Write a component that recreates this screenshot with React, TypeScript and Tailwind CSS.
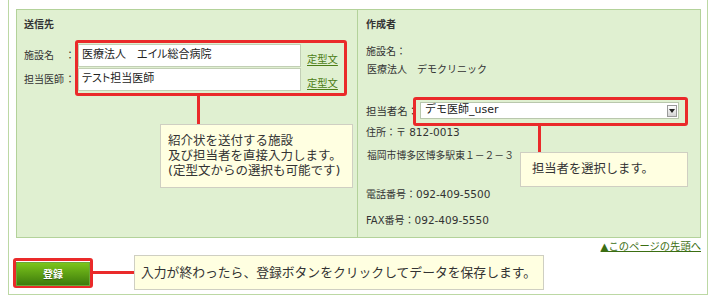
const red = "border-[#ea2a2a]";

function Label({ text }: { text: string }) {
  return (
    <div className="h-[23px] flex items-center justify-between">
      <span>{text}</span>
      <span>：</span>
    </div>
  );
}

function TextRow({ value }: { value: string }) {
  return (
    <div className="h-[23px] flex items-center">
      <div className="w-[223px] h-[23px] border border-[#c2cfb5] bg-white flex items-center pl-[3px] text-[11px] text-[#222] [font-feature-settings:'palt']">
        {value}
      </div>
      <a href="#" className="ml-[6px] mt-[7px] text-[10.3px] leading-[12px] text-[#4c7d16] underline underline-offset-2">
        定型文
      </a>
    </div>
  );
}

export default function App() {
  return (
    <div className="w-[720px] h-[306px] bg-white text-[#333] font-['DejaVu_Sans','Noto_Sans_CJK_JP',sans-serif]">
      <div className="ml-2 w-[700px] border-x border-b border-[#bcd8a4] pl-[7px] pr-[6px] pt-[9px] pb-[4px]">
        {/* form table */}
        <div className="flex h-[229px] border border-[#b3d29a] bg-[#e0f0d1]">
          {/* 送信先 */}
          <div className="relative w-[341px] border-r border-[#b3d29a] pl-[7px] pt-[7px]">
            <div className="text-[10px] font-bold leading-4">送信先</div>
            <div className="mt-[7px] flex">
              <div className="w-[51px] pt-[4px] flex flex-col gap-[1px] text-[10px]">
                <Label text="施設名" />
                <Label text="担当医師" />
              </div>
              <div className={`w-[272px] border-[3px] ${red} rounded-[3px] pt-[1px] pb-[2px] flex flex-col gap-[1px]`}>
                <TextRow value="医療法人　エイル総合病院" />
                <TextRow value="テスト担当医師" />
              </div>
            </div>

            <div className="absolute left-[180px] top-[85px] w-[3px] h-[29px] bg-[#ea2a2a]" />
            <div className="absolute left-[143px] top-[114px] w-[193px] h-[64px] border border-[#cfcfc2] bg-[#ffffe1] pl-[7px] pt-[8px] text-[12.5px] leading-[15px] text-[#333]">
              <div>紹介状を送付する施設</div>
              <div>及び担当者を直接入力します。</div>
              <div>(定型文からの選択も可能です)</div>
            </div>
          </div>

          {/* 作成者 */}
          <div className="relative flex-1 pl-[8px] pt-[7px] text-[10px]">
            <div className="font-bold leading-4">作成者</div>
            <div className="mt-[11px] leading-4">施設名：</div>
            <div className="mt-[2px] pl-[1px] leading-4">医療法人　デモクリニック</div>
            <div className="mt-[19px] flex items-center">
              <div className="w-[47px] whitespace-nowrap text-[10.4px]">担当者名：</div>
              <div className={`w-[275px] h-[29px] border-[3px] ${red} rounded-[3px] pl-[4px] pt-[2px]`}>
                <div className="w-[259px] h-[17px] border border-[#b9c7ad] bg-white flex items-center justify-between pl-[4px] pr-[1px]">
                  <span className="text-[11px] text-[#222]">デモ医師_user</span>
                  <span className="w-[10px] h-[12px] border border-[#9a9a9a] bg-linear-to-b from-white to-[#d4d4d4] flex items-center justify-center">
                    <svg width="6" height="4" viewBox="0 0 6 4">
                      <path d="M0 0h6L3 4z" fill="#222" />
                    </svg>
                  </span>
                </div>
              </div>
            </div>
            <div className="leading-[12px]">
              住所：〒 <span className="text-[10.5px]">812-0013</span>
            </div>
            <div className="mt-[11px] pl-[1px] leading-[12px] text-[9.8px]">福岡市博多区博多駅東１－２－３</div>
            <div className="mt-[26px] leading-[12px]">
              電話番号：<span className="text-[10.5px]">092-409-5500</span>
            </div>
            <div className="mt-[13px] leading-[12px]">
              <span className="text-[10px]">FAX</span>番号：<span className="text-[10.5px]">092-409-5550</span>
            </div>

            <div className="absolute left-[180px] top-[115px] w-[3px] h-[27px] bg-[#ea2a2a]" />
            <div className="absolute left-[162px] top-[142px] w-[168px] h-[35px] border border-[#cfcfc2] bg-[#ffffe1] pl-[11px] flex items-center text-[12.3px] text-[#333]">
              担当者を選択します。
            </div>
          </div>
        </div>

        <div className="h-4 flex justify-end items-center">
          <a href="#" className="text-[10.3px] leading-4 text-[#3b6e12] underline">
            ▲このページの先頭へ
          </a>
        </div>

        {/* 登録 */}
        <div className="mt-[1px] -ml-[3px] h-[35px] flex items-center">
          <div className={`w-[80px] h-[30px] border-[3px] ${red} rounded-[3px]`}>
            <button className="w-full h-full border border-[#6aa838] bg-linear-to-b from-[#7cc51c] to-[#3e7c0c] text-white text-[10px] font-bold [text-shadow:0_1px_1px_rgba(0,0,0,0.4)]">
              登録
            </button>
          </div>
          <div className="w-[41px] h-[3px] bg-[#ea2a2a]" />
          <div className="w-[410px] h-[35px] border border-[#cfcfc2] bg-[#ffffe1] pl-[6px] flex items-center text-[12.8px] text-[#333]">
            入力が終わったら、登録ボタンをクリックしてデータを保存します。
          </div>
        </div>
      </div>
    </div>
  );
}
